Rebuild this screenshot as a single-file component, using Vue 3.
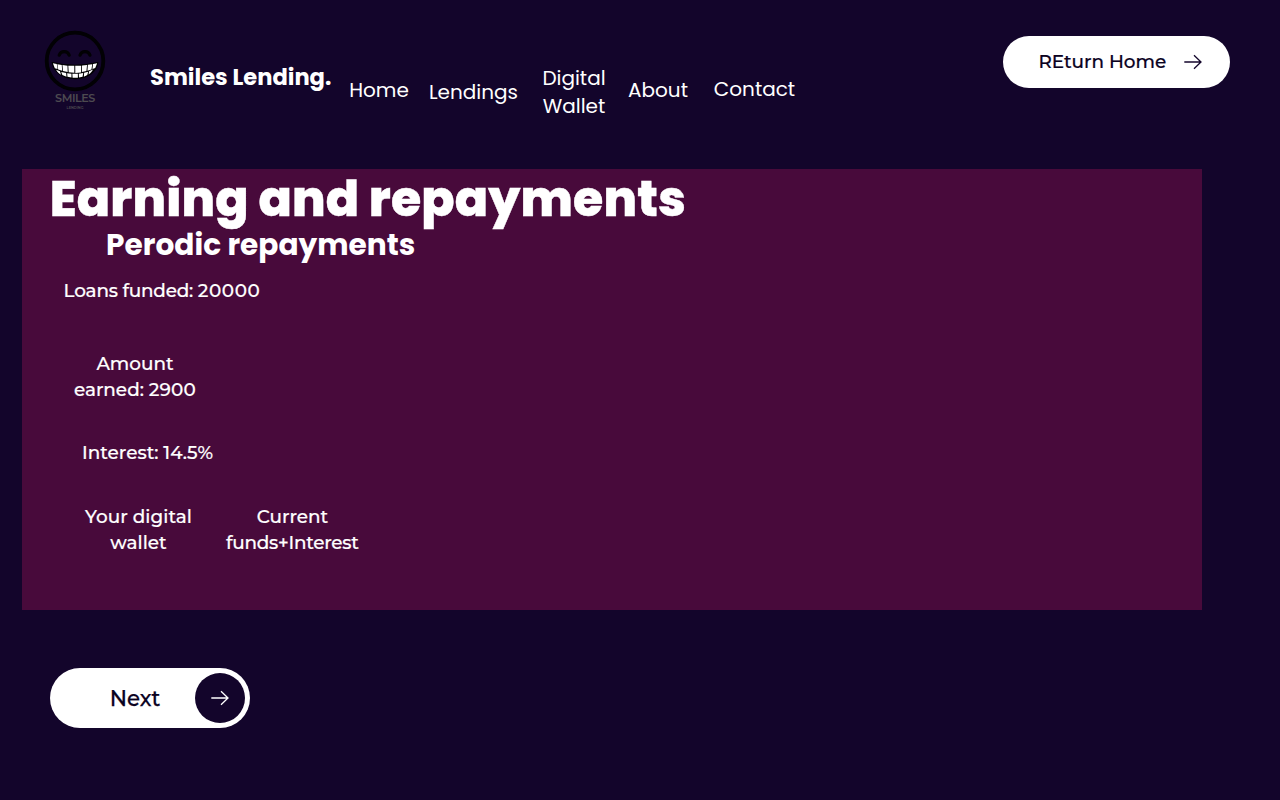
<script setup>
const links = [
  { label: 'Home', cls: 'home' },
  { label: 'Lendings', cls: 'lendings' },
  { label: 'Digital Wallet', cls: 'wallet' },
  { label: 'About', cls: 'about' },
  { label: 'Contact', cls: 'contact' },
]
</script>

<template>
  <div class="page">
    <header class="top">
      <div class="logo">
        <svg class="face" width="62" height="62" viewBox="0 0 62 62" fill="none">
          <circle cx="31" cy="31" r="28.3" stroke="#020104" stroke-width="3.8" />
          <path d="M15.200 25.200c1.500-4.800 8.500-4.800 10 0M36 25.200c1.500-4.800 8.500-4.800 10 0" stroke="#020104" stroke-width="3.200" stroke-linecap="round" />
          <g transform="translate(-.6 -1.8) scale(1.02 1.040)">
            <path d="M8.500 33c14 3.200 31 3.200 45 0-1.500 8.500-9 15.500-22.500 15.500S10 41.500 8.500 33z" fill="#020104" stroke="#020104" stroke-width="1" stroke-linejoin="round" />
            <path d="M9.300 33.700l3.800.8.800 4.800-2.700-.8zM13.700 34.600l4.300.7.400 5.500-3.900-1zM18.700 35.400l4.900.6.200 6-4.600-.8zM24.400 36l5.900.2v6.700l-5.500-.5zM31.200 36.200l5.900-.2-.3 6.600-5.500.4zM37.900 35.900l4.900-.5-.6 5.700-4.500.9zM43.600 35.200l4.300-.6-.8 5-3.900 1.200zM48.700 34.500l4-.8-1.900 4.600-2.700.9zM12.500 40l3.700 1.400 1.100 3.300c-2.200-1.200-3.900-2.800-4.800-4.700zM17.500 42l4.800 1 .3 3.700-4-1.600zM23.300 43.200l4.200.5v3.700l-3.900-.6zM28.400 43.800l5.400.1v3.700h-5.200zM34.700 43.700l4.300-.6-.6 3.700-3.500.6zM39.900 42.900l4-1.100-.9 3.300-3.300 1.500zM44.800 41.400l3.800-1.700c-1 2-2.400 3.500-4.300 4.700z" fill="#fff" />
          </g>
        </svg>
        <span class="logo-name">SMILES</span>
        <span class="logo-sub">LENDING</span>
      </div>
      <div class="brand">Smiles Lending.</div>
      <nav class="nav">
        <a v-for="l in links" :key="l.cls" :class="l.cls">{{ l.label }}</a>
      </nav>
      <button class="return">
        <span>REturn Home</span>
        <svg width="18" height="16" viewBox="0 0 18 16" fill="none" stroke="#14062c" stroke-width="1.3">
          <path d="M.3 8h16.800M10 1.200L17 8l-7 6.800" />
        </svg>
      </button>
    </header>

    <main class="panel">
      <h1>Earning and repayments</h1>
      <h2>Perodic repayments</h2>
      <p class="loans">Loans funded: <span class="num">20000</span></p>
      <p class="amount">Amount<br />earned: <span class="num">2900</span></p>
      <p class="interest">Interest: 14.5%</p>
      <div class="row">
        <p class="yours">Your digital<br />wallet</p>
        <p class="funds">Current<br /><span class="sum">funds+Interest</span></p>
      </div>
    </main>

    <button class="next">
      <span class="next-label">Next</span>
      <span class="dot">
        <svg width="18" height="16" viewBox="0 0 18 16" fill="none" stroke="#fff" stroke-width="1.3">
          <path d="M.3 8h16.800M10 1.200L17 8l-7 6.800" />
        </svg>
      </span>
    </button>
  </div>
</template>

<style>
body { background: #13052b; }
</style>

<style scoped>
.page { box-sizing: border-box; width: 1280px; height: 800px; overflow: hidden; background: #13052b; color: #fff; font-family: Poppins, sans-serif; }
.top { display: flex; align-items: flex-start; height: 170px; box-sizing: border-box; padding: 30px 50px 0 44px; }
.logo { width: 62px; display: flex; flex-direction: column; align-items: center; color: #4d4a50; }
.face { display: block; }
.logo-name { font: 600 11.200px/12px Montserrat, sans-serif; letter-spacing: -.45px; }
.logo-sub { font: 600 3.500px/8px Montserrat, sans-serif; }
.brand { margin: 31px 0 0 44px; width: 199px; font-size: 22.6px; font-weight: 700; line-height: 32px; white-space: nowrap; }
.nav { display: flex; align-items: flex-start; font-size: 20px; line-height: 28px; text-align: center; }
.home { width: 60px; margin-top: 46px; }
.lendings { width: 90px; margin: 48px 0 0 19.500px; }
.wallet { width: 70px; margin: 34px 0 0 20.500px; }
.about { width: 60px; margin: 46px 0 0 19px; }
.contact { width: 82px; margin: 45px 0 0 25.500px; }
.return { display: flex; align-items: center; justify-content: space-between; box-sizing: border-box; width: 227px; height: 52px; margin: 6px 0 0 auto; padding: 0 28px 1px 35.500px; border: 0; border-radius: 26px; background: #fff; color: #0b021f; font: 500 18.400px/26px Montserrat, sans-serif; white-space: nowrap; -webkit-text-stroke: .2px #0b021f; }
.panel { box-sizing: border-box; width: 1180px; height: 441px; margin: -1px 0 0 22px; padding: 1px 0 0 28px; background: #480a3b; }
h1 { margin: 0 0 0 -.3px; font-size: 49px; font-weight: 800; line-height: 59px; white-space: nowrap; letter-spacing: .2px; -webkit-text-stroke: .4px #fff; }
h2 { margin: 0 0 0 56px; font-size: 29.600px; font-weight: 700; line-height: 32px; white-space: nowrap; letter-spacing: .02px; }
p { margin: 0; font: 500 18.400px/26px Montserrat, sans-serif; text-align: center; white-space: nowrap; -webkit-text-stroke: .2px #fff; }
.loans { width: 224px; margin-top: 17px; letter-spacing: -.2px; }
.num { letter-spacing: .6px; }
.amount { width: 170px; margin-top: 47px; }
.amount .num { letter-spacing: .2px; }
.interest { width: 195px; margin-top: 37px; }
.row { display: flex; margin-top: 38px; }
.yours { width: 177px; letter-spacing: .05px; }
.funds { width: 131px; }
.sum { margin: 0 1px 0 -1px; letter-spacing: -.25px; }
.next { display: flex; align-items: center; box-sizing: border-box; width: 200px; height: 60px; margin: 58px 0 0 50px; padding: 0 5px 0 0; border: 0; border-radius: 30px; background: #fff; color: #0b021f; font: 500 21.300px/30px Montserrat, sans-serif; -webkit-text-stroke: .25px #0b021f; }
.next-label { flex: 1; padding-left: 25px; text-align: center; }
.dot { display: flex; align-items: center; justify-content: center; width: 50px; height: 50px; border-radius: 50%; background: #13052b; }
</style>
